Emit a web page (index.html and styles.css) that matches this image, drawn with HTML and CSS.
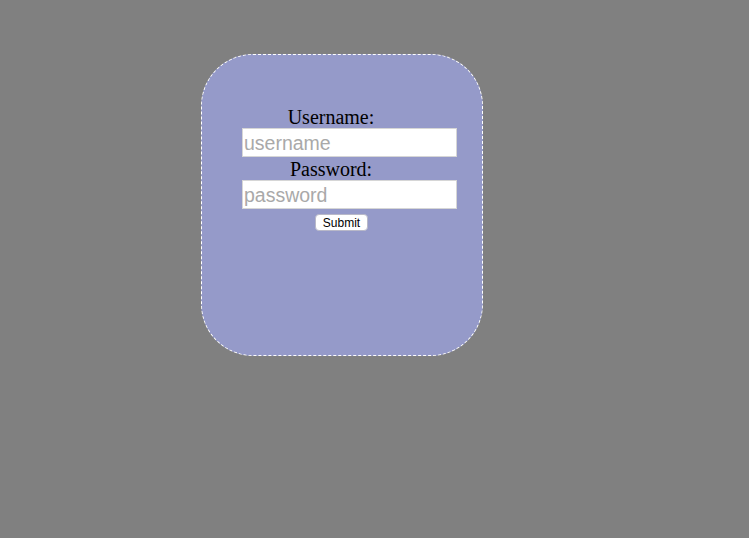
FILE: index.html
```html
<!DOCTYPE html>
<html lang="en">
<head>
  <meta charset="UTF-8">
  <title>Login</title>
  <link rel="stylesheet" href="styles.css">
</head>
<body>

  <div class="card">
    <form class="login-form">
      <label class="field-label" for="username">Username:</label>
      <input type="text" id="username" class="field-input" placeholder="username">
      <label class="field-label" for="password">Password:</label>
      <input type="password" id="password" class="field-input" placeholder="password">
      <div class="submit-row">
        <button type="submit" class="submit-btn">Submit</button>
      </div>
    </form>
  </div>

</body>
</html>
```

FILE: styles.css
```css
* {
  margin: 0;
  padding: 0;
  box-sizing: border-box;
}

body {
  background-color: #808080;
  font-family: "Liberation Serif", "Times New Roman", serif;
  min-height: 100vh;
  padding: 54px 0 0 201px;
}

.card {
  width: 282px;
  height: 302px;
  background-color: #959ac9;
  border: 1px dashed #ffffff;
  border-radius: 52px;
  padding: 50px 0 0 40px;
}

.login-form {
  display: flex;
  flex-direction: column;
  align-items: flex-start;
}

.field-label {
  display: block;
  width: 178px;
  text-align: center;
  font-size: 20px;
  line-height: 24px;
  margin-bottom: -1px;
  color: #000;
}

.field-input {
  width: 215px;
  height: 29px;
  border: 1px solid #d6d6d6;
  background-color: #fff;
  padding: 1px 1px 0;
  font-family: "Liberation Sans", Arial, sans-serif;
  font-size: 19.5px;
  color: #000;
  outline: none;
}

.field-input::placeholder {
  color: #a9a9a9;
}

.submit-row {
  width: 199px;
  display: flex;
  justify-content: center;
  margin-top: 5px;
}

.submit-btn {
  width: 53px;
  height: 17px;
  background-color: #fff;
  border: 1px solid #b8b8c8;
  border-radius: 4px;
  font-family: "Liberation Sans", Arial, sans-serif;
  font-size: 12px;
  color: #000;
  cursor: pointer;
}
```
